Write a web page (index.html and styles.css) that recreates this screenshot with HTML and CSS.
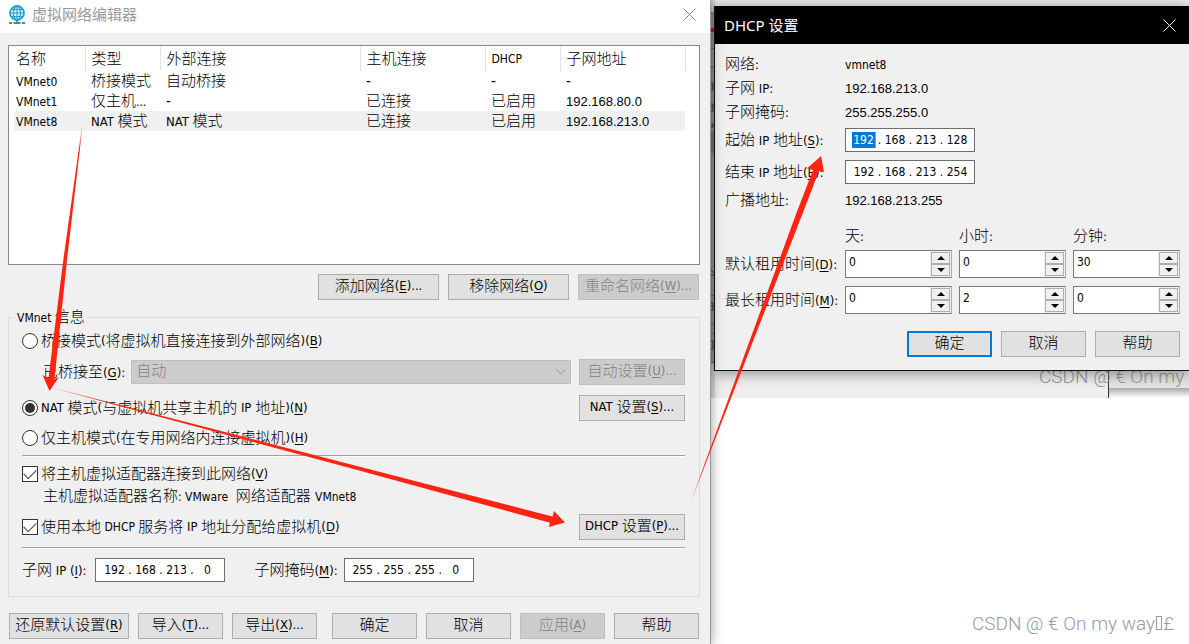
FILE: index.html
```html
<!DOCTYPE html>
<html lang="zh-CN">
<head>
<meta charset="utf-8">
<title>虚拟网络编辑器</title>
<link rel="stylesheet" href="styles.css">
</head>
<body>
<div class="desktop">
  <main class="editor">
    <header class="titlebar">
      <svg class="logo" viewBox="0 0 18 20" aria-hidden="true">
        <circle cx="9" cy="8" r="7" fill="#d9f1fb" stroke="#2a9fd0" stroke-width="1.8"/>
        <path d="M9 1v14M2 8h14M3 4.500h12M3 11.500h12" stroke="#2a9fd0" stroke-width="1.200" fill="none"/>
        <ellipse cx="9" cy="8" rx="3.500" ry="7" fill="none" stroke="#2a9fd0" stroke-width="1.200"/>
        <path d="M9 15v3" stroke="#2a9fd0" stroke-width="2"/>
        <path d="M1 18h3M5.500 18h7M14 18h3" stroke="#2f9c95" stroke-width="2"/>
      </svg>
      <h1 class="title">虚拟网络编辑器</h1>
      <button class="close" type="button" aria-label="关闭"><svg viewBox="0 0 13 13"><path d="M.5.5l12 12M12.500.5l-12 12"/></svg></button>
    </header>
    <div class="content">
      <div class="list">
        <table class="networks">
          <colgroup><col class="c-name"><col class="c-type"><col class="c-ext"><col class="c-host"><col class="c-dhcp"><col class="c-addr"></colgroup>
          <thead><tr><th>名称</th><th>类型</th><th>外部连接</th><th>主机连接</th><th><span class="en">DHCP</span></th><th>子网地址</th></tr></thead>
          <tbody>
            <tr><td><span class="en">VMnet0</span></td><td>桥接模式</td><td>自动桥接</td><td>-</td><td>-</td><td>-</td></tr>
            <tr><td><span class="en">VMnet1</span></td><td>仅主机<span class="en">...</span></td><td>-</td><td>已连接</td><td>已启用</td><td><span class="num">192.168.80.0</span></td></tr>
            <tr class="selected"><td><span class="en">VMnet8</span></td><td><span class="key">NAT&nbsp;</span>模式</td><td><span class="key">NAT&nbsp;</span>模式</td><td>已连接</td><td>已启用</td><td><span class="num">192.168.213.0</span></td></tr>
          </tbody>
        </table>
      </div>
      <div class="list-actions">
        <button class="btn" type="button">添加网络<span class="key">(<u>E</u>)...</span></button>
        <button class="btn" type="button">移除网络<span class="key">(<u>O</u>)</span></button>
        <button class="btn" type="button" disabled>重命名网络<span class="key">(<u>W</u>)...</span></button>
      </div>
      <fieldset class="info">
        <legend><span class="en">VMnet </span> 信息</legend>
        <div class="row">
          <label class="choice"><input type="radio" name="mode">桥接模式<span class="key">(</span>将虚拟机直接连接到外部网络<span class="key">)(<u>B</u>)</span></label>
        </div>
        <div class="row bridge">
          <label for="bridge">已桥接至<span class="key">(<u>G</u>):</span></label>
          <div class="combo">
            <select id="bridge" disabled><option>自动</option></select>
            <svg viewBox="0 0 10 6" aria-hidden="true"><path d="M.5.5l4.500 4.500l4.500-4.500"/></svg>
          </div>
          <button class="btn side" type="button" disabled>自动设置<span class="key">(<u>U</u>)...</span></button>
        </div>
        <div class="row nat">
          <label class="choice"><input type="radio" name="mode" checked><span class="key">NAT </span>模式<span class="key">(</span>与虚拟机共享主机的<span class="key">&nbsp;IP&nbsp;</span>地址<span class="key">)(<u>N</u>)</span></label>
          <button class="btn side" type="button"><span class="key">NAT </span>设置<span class="key">(<u>S</u>)...</span></button>
        </div>
        <div class="row hostonly">
          <label class="choice"><input type="radio" name="mode">仅主机模式<span class="key">(</span>在专用网络内连接虚拟机<span class="key">)(<u>H</u>)</span></label>
        </div>
        <hr>
        <div class="row">
          <label class="choice"><input type="checkbox" checked>将主机虚拟适配器连接到此网络<span class="key">(<u>V</u>)</span></label>
        </div>
        <p class="adapter">主机虚拟适配器名称<span class="en">: VMware&nbsp;</span> 网络适配器 <span class="en">VMnet8</span></p>
        <div class="row dhcp">
          <label class="choice"><input type="checkbox" checked>使用本地<span class="en"> DHCP </span>服务将<span class="key">&nbsp;IP&nbsp;</span>地址分配给虚拟机<span class="key">(<u>D</u>)</span></label>
          <button class="btn side" type="button"><span class="key">DHCP </span>设置<span class="key">(<u>P</u>)...</span></button>
        </div>
        <hr>
        <div class="row subnet">
          <label for="net1">子网<span class="key">&nbsp;IP (<u>I</u>):</span></label>
          <div class="ip"><input id="net1" value="192"><i>.</i><input aria-label="2" value="168"><i>.</i><input aria-label="3" value="213"><i>.</i><input aria-label="4" value="0"></div>
          <label class="mask" for="mask1">子网掩码<span class="key">(<u>M</u>):</span></label>
          <div class="ip"><input id="mask1" value="255"><i>.</i><input aria-label="2" value="255"><i>.</i><input aria-label="3" value="255"><i>.</i><input aria-label="4" value="0"></div>
        </div>
      </fieldset>
      <footer class="footer">
        <button class="btn wide" type="button">还原默认设置<span class="key">(<u>R</u>)</span></button>
        <button class="btn" type="button">导入<span class="key">(<u>T</u>)...</span></button>
        <button class="btn" type="button">导出<span class="key">(<u>X</u>)...</span></button>
        <button class="btn apart" type="button">确定</button>
        <button class="btn" type="button">取消</button>
        <button class="btn" type="button" disabled>应用<span class="key">(<u>A</u>)</span></button>
        <button class="btn" type="button">帮助</button>
      </footer>
    </div>
  </main>

  <section class="right">
    <div class="backdrop">
      <div class="backdrop-edge"></div>
      <span class="watermark">CSDN @ € On my</span>
      <svg class="sliver" viewBox="0 0 4 398" preserveAspectRatio="none" aria-hidden="true">
        <path fill="#ababab" d="M0 0h4v398H0z"/>
        <path fill="#d8d8d8" d="M0 0h4v12H0zM0 362h4v36H0z"/>
        <path fill="#777" d="M0 13h4v1H0zM0 48h4v1H0zM0 153h4v1H0zM0 295h4v1H0zM0 324h4v1H0zM0 333h4v1H0zM0 362h4v1H0z"/>
        <path fill="#d02015" d="M0 28h4v4H0z"/>
        <path fill="#888" d="M0 131h4v21H0z"/>
        <path fill="none" stroke="#394454" d="M0 67h2M0 83h2v3H0M2 86v4H0M0 104h2v3H0M2 107v4H0M0 124h2v3H0M0 303h2v3H0M2 306v4H0M0 341h2v8H0M0 270l3 3M0 275h3"/>
      </svg>
    </div>
    <section class="dialog" role="dialog" aria-labelledby="dlg">
      <header class="dialog-title">
        <h2 id="dlg">DHCP 设置</h2>
        <button class="close" type="button" aria-label="关闭"><svg viewBox="0 0 13 13"><path d="M.5.5l12 12M12.500.5l-12 12"/></svg></button>
      </header>
      <div class="dialog-body">
        <dl class="facts">
          <div><dt>网络<span class="key">:</span></dt><dd><span class="en">vmnet8</span></dd></div>
          <div><dt>子网<span class="key">&nbsp;IP:</span></dt><dd><span class="num">192.168.213.0</span></dd></div>
          <div><dt>子网掩码<span class="key">:</span></dt><dd><span class="num">255.255.255.0</span></dd></div>
        </dl>
        <div class="field">
          <label for="start1">起始<span class="key">&nbsp;IP&nbsp;</span>地址<span class="key">(<u>S</u>):</span></label>
          <div class="ip"><input class="active" id="start1" value="192"><i>.</i><input aria-label="2" value="168"><i>.</i><input aria-label="3" value="213"><i>.</i><input aria-label="4" value="128"></div>
        </div>
        <div class="field">
          <label for="end1">结束<span class="key">&nbsp;IP&nbsp;</span>地址<span class="key">(<u>E</u>):</span></label>
          <div class="ip"><input id="end1" value="192"><i>.</i><input aria-label="2" value="168"><i>.</i><input aria-label="3" value="213"><i>.</i><input aria-label="4" value="254"></div>
        </div>
        <dl class="facts">
          <div><dt>广播地址<span class="key">:</span></dt><dd><span class="num">192.168.213.255</span></dd></div>
        </dl>
        <div class="lease">
          <span></span><span class="unit">天<span class="key">:</span></span><span class="unit">小时<span class="key">:</span></span><span class="unit">分钟<span class="key">:</span></span>
          <label for="d1">默认租用时间<span class="key">(<u>D</u>):</span></label>
          <div class="spin"><input id="d1" type="number" value="0"><div class="arrows"><button type="button" aria-label="增加"></button><button type="button" aria-label="减少"></button></div></div>
          <div class="spin"><input aria-label="小时" type="number" value="0"><div class="arrows"><button type="button" aria-label="增加"></button><button type="button" aria-label="减少"></button></div></div>
          <div class="spin"><input aria-label="分钟" type="number" value="30"><div class="arrows"><button type="button" aria-label="增加"></button><button type="button" aria-label="减少"></button></div></div>
          <label for="d2">最长租用时间<span class="key">(<u>M</u>):</span></label>
          <div class="spin"><input id="d2" type="number" value="0"><div class="arrows"><button type="button" aria-label="增加"></button><button type="button" aria-label="减少"></button></div></div>
          <div class="spin"><input aria-label="小时" type="number" value="2"><div class="arrows"><button type="button" aria-label="增加"></button><button type="button" aria-label="减少"></button></div></div>
          <div class="spin"><input aria-label="分钟" type="number" value="0"><div class="arrows"><button type="button" aria-label="增加"></button><button type="button" aria-label="减少"></button></div></div>
        </div>
        <footer class="dialog-actions">
          <button class="btn primary" type="button">确定</button>
          <button class="btn" type="button">取消</button>
          <button class="btn" type="button">帮助</button>
        </footer>
      </div>
    </section>
    <span class="watermark credit">CSDN @ € On my way<span class="box"></span>£</span>
  </section>

  <svg class="annotations" viewBox="0 0 1189 644" preserveAspectRatio="none" aria-hidden="true">
    <defs>
      <linearGradient id="g1" gradientUnits="userSpaceOnUse" x1="82" y1="126" x2="79" y2="150"><stop offset="0" stop-color="#ff2412" stop-opacity=".2"/><stop offset="1" stop-color="#ff2412"/></linearGradient>
      <linearGradient id="g2" gradientUnits="userSpaceOnUse" x1="54" y1="388" x2="110" y2="402"><stop offset="0" stop-color="#ff2412" stop-opacity=".2"/><stop offset="1" stop-color="#ff2412"/></linearGradient>
      <linearGradient id="g3" gradientUnits="userSpaceOnUse" x1="687" y1="512" x2="705" y2="464"><stop offset="0" stop-color="#ff2412" stop-opacity=".2"/><stop offset="1" stop-color="#ff2412"/></linearGradient>
    </defs>
    <path fill="url(#g1)" d="M82 126L63.300 260L48.500 378L42.500 375L49.500 391L59 377L54.500 379L67 260L82.600 126z"/>
    <path fill="url(#g2)" d="M54 388L350 464.300L552.500 516.500L554 511L565 522.500L548.700 527L550 522.700L350 468L54 388.600z"/>
    <path fill="url(#g3)" d="M687 512L725 408L795.700 215L813 170L807 168.500L821 156L824 172L819 171L802 215L726 411z"/>
  </svg>
</div>
</body>
</html>
```
FILE: styles.css
```css
* { box-sizing: border-box; }

body {
  margin: 0;
  background: #fff;
  color: #000;
  font: 300 15px/20px "DejaVu Sans Condensed", "Noto Sans CJK SC", sans-serif;
}

button, input, select { font: inherit; color: inherit; }

.desktop {
  position: relative;
  display: grid;
  grid-template-columns: minmax(0, 711fr) minmax(0, 478fr);
  min-height: 100vh;
  overflow: hidden;
  white-space: nowrap;
}

.en { font-size: 12px; }
.num { font: 13px "Liberation Sans", sans-serif; }
.key { font-size: 13px; }
u { text-underline-offset: 2px; }

/* editor window */
.editor {
  position: relative;
  z-index: 1;
  background: #f0f0f0;
  border-right: 1px solid #999;
  box-shadow: 0 0 12px rgba(0, 0, 0, .4);
}

.titlebar {
  display: flex;
  align-items: center;
  height: 33px;
  padding: 0 14px 4px 8px;
  background: #fff;
}

.logo { width: 18px; height: 20px; }

.title {
  flex: 1;
  margin: 0 0 0 6px;
  color: #999;
  font-size: 15px;
  font-weight: 400;
}

.close {
  display: flex;
  padding: 0;
  border: 0;
  background: none;
}

.close svg {
  width: 13px;
  height: 13px;
  fill: none;
  stroke: #888;
  stroke-width: 1;
}

.content { padding: 12px 10px 5px 8px; }

.list {
  height: 220px;
  padding-left: 5px;
  border: 1px solid #828790;
  background: #fff;
}

.networks {
  width: 671px;
  table-layout: fixed;
  border-collapse: collapse;
}

.c-name { width: 71px; }
.c-type, .c-dhcp { width: 75px; }
.c-ext { width: 200px; }
.c-host, .c-addr { width: 125px; }

.networks th, .networks td {
  height: 20px;
  padding: 0 0 0 6px;
  font-weight: inherit;
  line-height: 18px;
  text-align: left;
}

.networks th { height: 25px; border-right: 1px solid #e2e2e2; }
.networks th:first-child, .networks td:first-child { padding-left: 2px; }
.selected { background: #f0f0f0; }

.btn {
  display: flex;
  align-items: center;
  justify-content: center;
  width: 85px;
  height: 26px;
  padding: 0 0 2px;
  border: 1px solid #adadad;
  background: #e1e1e1;
  white-space: pre;
}

.btn:disabled {
  border-color: #bfbfbf;
  background: #ccc;
  color: #838383;
}

.btn .key, .btn .en { line-height: 20px; }

.list-actions {
  display: flex;
  justify-content: flex-end;
  gap: 9px;
  padding: 9px 1px 0 0;
}

.list-actions .btn { width: 121px; }

.info {
  position: relative;
  margin: 7px 0 0;
  padding: 3px 14px 14px 13px;
  border: 1px solid #dcdcdc;
}

.info legend {
  margin-left: -6px;
  padding: 0 2px 0 1px;
  line-height: 20px;
}

.row {
  display: flex;
  align-items: center;
  height: 20px;
}

.choice { display: flex; align-items: center; white-space: pre; }

.choice input {
  flex: none;
  display: grid;
  place-items: center;
  width: 16px;
  height: 16px;
  margin: 0 3px 0 0;
  border: 1px solid #333;
  background: #fff;
  appearance: none;
}

.choice input[type="radio"] { border-radius: 50%; }

.choice input[type="radio"]:checked::before {
  width: 10px;
  height: 10px;
  border-radius: 50%;
  background: #333;
  content: "";
}

.choice input[type="checkbox"]:checked::before {
  width: 11px;
  height: 6px;
  margin-bottom: 3px;
  border: solid #444;
  border-width: 0 0 1px 1px;
  transform: rotate(-45deg);
  content: "";
}

.side { width: 106px; margin-left: auto; }

.bridge { height: 26px; margin-top: 8px; padding-left: 21px; }

.combo {
  position: relative;
  flex: 1;
  margin: 0 8px 0 6px;
}

.combo select {
  display: block;
  width: 100%;
  height: 24px;
  padding: 0 4px 2px;
  border: 1px solid #bfbfbf;
  border-radius: 0;
  background: #ccc;
  color: #838383;
  opacity: 1;
  appearance: none;
}

.combo svg {
  position: absolute;
  right: 5px;
  top: 9px;
  width: 10px;
  height: 6px;
  fill: none;
  stroke: #999;
}

.nat { height: 26px; margin-top: 10px; }
.hostonly { margin-top: 7px; }

hr {
  height: 2px;
  margin: 7px 0;
  border: 0;
  border-top: 1px solid #a0a0a0;
  background: #fff;
}

.adapter {
  margin: 2px 0 7px;
  padding-left: 21px;
}

.dhcp { height: 26px; }

.subnet { height: 24px; margin-top: 9px; }

.ip {
  display: flex;
  align-items: center;
  width: 130px;
  height: 24px;
  padding: 0 0 0 6px;
  border: 1px solid #6e6e6e;
  background: #fff;
  font: 12px/16px "DejaVu Sans Condensed", sans-serif;
}

.ip input {
  width: 24px;
  height: 16px;
  padding: 0;
  border: 0;
  background: none;
  text-align: center;
}

.ip i { width: 7px; font-style: normal; text-align: center; }

.ip .active {
  border-right: 1px solid #e88a2a;
  background: #0078d7;
  color: #fff;
}

.subnet .ip { margin-left: 9px; }
.mask { margin-left: 29px; }
.subnet .mask + .ip { margin-left: 6px; }

.footer {
  display: flex;
  gap: 9px;
  margin-top: 16px;
  padding: 0 1px;
}

.footer .wide { width: 120px; }
.footer .apart { margin-left: 6px; }

/* right side */
.right { position: relative; display: flex; flex-direction: column; }

.backdrop {
  position: absolute;
  inset: 0 0 auto 0;
  height: 398px;
  overflow: hidden;
  background: #efefef;
}

.backdrop-edge {
  position: absolute;
  inset: 360px 0 0 auto;
  width: 81px;
  border-left: 1px solid #333;
  background: linear-gradient(#e4e4e4 28px, #aaa 28px, #fff 38px);
}

.sliver {
  position: absolute;
  inset: 0 auto 0 0;
  width: 4px;
  height: 398px;
}

.watermark {
  color: #999;
  font: 300 19px/24px Roboto, sans-serif;
}

.backdrop .watermark { position: absolute; left: 328px; bottom: 9px; }

.credit {
  align-self: flex-end;
  margin: auto 15px 8px 0;
}

.box {
  display: inline-block;
  width: 6px;
  height: 14px;
  margin: 0 1px;
  border: 1px solid #999;
}

.dialog {
  position: relative;
  margin: 6px 0 0 3px;
  border: solid #111;
  border-width: 0 0 1px 1px;
  background: #f0f0f0;
  box-shadow: 0 2px 14px rgba(0, 0, 0, .45);
}

.dialog-title {
  display: flex;
  align-items: center;
  justify-content: space-between;
  height: 38px;
  padding: 0 13px 0 9px;
  background: #000;
  color: #fff;
}

.dialog-title h2 {
  margin: 0;
  font: 15px/20px "Noto Sans", "Noto Sans CJK SC", sans-serif;
}

.dialog-title .close svg { stroke: #fff; }

.dialog-body { padding: 8px 9px 13px 10px; }

.facts { margin: 0; }
.facts > div, .field { display: flex; align-items: center; height: 24px; }
.facts dt, .field label { width: 120px; }
.facts dd { margin: 0; }
.field { height: 32px; }

.lease {
  display: grid;
  grid-template-columns: 113px repeat(3, minmax(0, 1fr));
  grid-template-rows: 34px 36px 36px;
  column-gap: 7px;
  align-items: center;
}

.unit { padding-top: 14px; }

.spin {
  display: flex;
  height: 28px;
  border: 1px solid #7a7a7a;
  border-right-color: #adadad;
  background: #fff;
}

.spin input {
  flex: 1;
  min-width: 0;
  padding: 0 3px 4px;
  border: 0;
  background: none;
  font-size: 12px;
  appearance: textfield;
}

.spin input::-webkit-inner-spin-button { appearance: none; }

.arrows {
  display: grid;
  grid-template-rows: 1fr 1fr;
  width: 21px;
  padding: 1px;
  background: #f0f0f0;
}

.arrows button {
  display: grid;
  place-items: center;
  padding: 0;
  border: 1px solid #adadad;
  background: #f0f0f0;
}

.arrows button::before {
  border: solid transparent;
  border-width: 0 4px 4px;
  border-bottom-color: #000;
  content: "";
}

.arrows button:last-child::before { transform: rotate(180deg); }

.dialog-actions {
  display: flex;
  justify-content: flex-end;
  gap: 9px;
  margin-top: 13px;
}

.primary { border: 2px solid #0078d7; }

.annotations {
  position: absolute;
  z-index: 2;
  inset: 0;
  width: 100%;
  height: 100%;
  pointer-events: none;
}
```
